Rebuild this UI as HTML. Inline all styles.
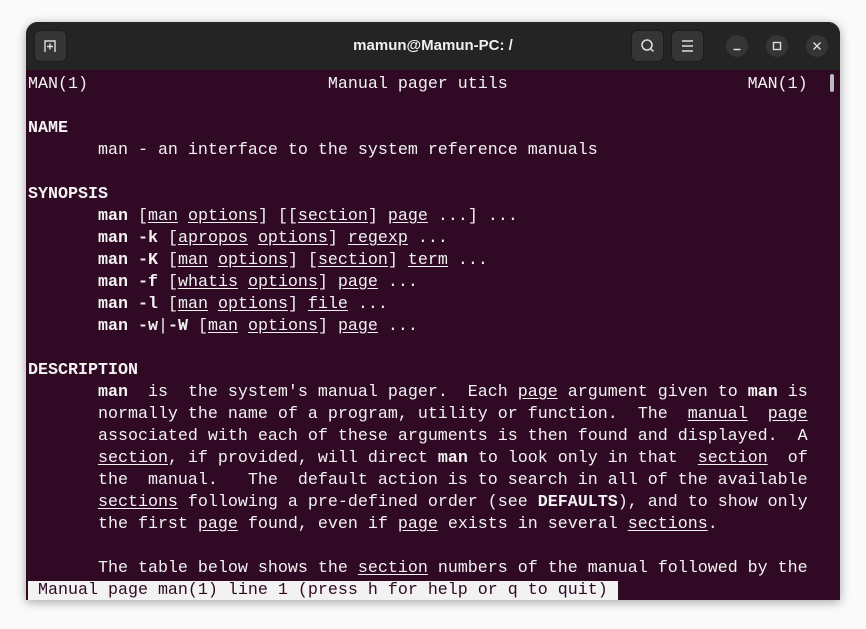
<!DOCTYPE html>
<html><head><meta charset="utf-8"><style>
body{margin:0;width:866px;height:629px;background:#fafafa;position:relative;overflow:hidden;font-family:"Liberation Sans",sans-serif}
.win{position:absolute;left:26px;top:22px;width:814px;height:578px;border-radius:12px 12px 0 0;background:#300a24;overflow:hidden;box-shadow:0 2px 10px rgba(0,0,0,.35)}
.tb{position:absolute;left:0;top:0;width:814px;height:48px;background:#242424}
.btn{position:absolute;top:8px;width:33px;height:32px;border-radius:6px;background:#353535;border:1px solid #1c1c1c;box-sizing:border-box}
.c{position:absolute;top:13px;width:22px;height:22px;border-radius:50%;background:#353535}
.title{position:absolute;left:0;width:814px;top:15px;text-align:center;color:#f0f0f0;font-weight:bold;font-size:15px}
pre{position:absolute;left:2px;top:52px;margin:0;font-family:"Liberation Mono","DejaVu Sans Mono",monospace;font-size:16.67px;line-height:22px;color:#f2f2f2}
u{text-decoration:underline;text-underline-offset:2px}
.st{background:#f2f2f2;color:#300a24}
.sb{position:absolute;right:6px;top:52px;width:4px;height:18px;background:#bbb;border-radius:2px}
</style></head><body>
<div class="win">
<div class="tb">
<div class="btn" style="left:8px"><svg width="31" height="30" viewBox="0 0 31 30"><path d="M10 21V10h10v11M15 12.5v6M12 15.5h6" fill="none" stroke="#ddd" stroke-width="1.4"/></svg></div>
<div class="title">mamun@Mamun-PC: /</div>
<div class="btn" style="left:605px"><svg width="31" height="30" viewBox="0 0 31 30"><circle cx="15" cy="14" r="5" fill="none" stroke="#ddd" stroke-width="1.5"/><path d="M18.5 17.5l3 3" stroke="#ddd" stroke-width="1.5"/></svg></div>
<div class="btn" style="left:645px"><svg width="31" height="30" viewBox="0 0 31 30"><path d="M10 10h11M10 15h11M10 20h11" stroke="#ddd" stroke-width="1.4"/></svg></div>
<div class="c" style="left:700px"><svg width="22" height="22"><path d="M7.5 14.5h7" stroke="#ddd" stroke-width="1.4"/></svg></div>
<div class="c" style="left:740px"><svg width="22" height="22"><rect x="7.5" y="7.5" width="7" height="7" fill="none" stroke="#ddd" stroke-width="1.4"/></svg></div>
<div class="c" style="left:780px"><svg width="22" height="22"><path d="M7.5 7.5l7 7M14.5 7.5l-7 7" stroke="#ddd" stroke-width="1.4"/></svg></div>
</div>
<div class="sb"></div>
<pre>MAN(1)                        Manual pager utils                        MAN(1)

<b>NAME</b>
       man - an interface to the system reference manuals

<b>SYNOPSIS</b>
       <b>man</b> [<u>man</u> <u>options</u>] [[<u>section</u>] <u>page</u> ...] ...
       <b>man</b> <b>-k</b> [<u>apropos</u> <u>options</u>] <u>regexp</u> ...
       <b>man</b> <b>-K</b> [<u>man</u> <u>options</u>] [<u>section</u>] <u>term</u> ...
       <b>man</b> <b>-f</b> [<u>whatis</u> <u>options</u>] <u>page</u> ...
       <b>man</b> <b>-l</b> [<u>man</u> <u>options</u>] <u>file</u> ...
       <b>man</b> <b>-w</b>|<b>-W</b> [<u>man</u> <u>options</u>] <u>page</u> ...

<b>DESCRIPTION</b>
       <b>man</b>  is  the system's manual pager.  Each <u>page</u> argument given to <b>man</b> is
       normally the name of a program, utility or function.  The  <u>manual</u>  <u>page</u>
       associated with each of these arguments is then found and displayed.  A
       <u>section</u>, if provided, will direct <b>man</b> to look only in that  <u>section</u>  of
       the  manual.   The  default action is to search in all of the available
       <u>sections</u> following a pre-defined order (see <b>DEFAULTS</b>), and to show only
       the first <u>page</u> found, even if <u>page</u> exists in several <u>sections</u>.

       The table below shows the <u>section</u> numbers of the manual followed by the
<span class="st"> Manual page man(1) line 1 (press h for help or q to quit) </span></pre>
</div>
</body></html>
